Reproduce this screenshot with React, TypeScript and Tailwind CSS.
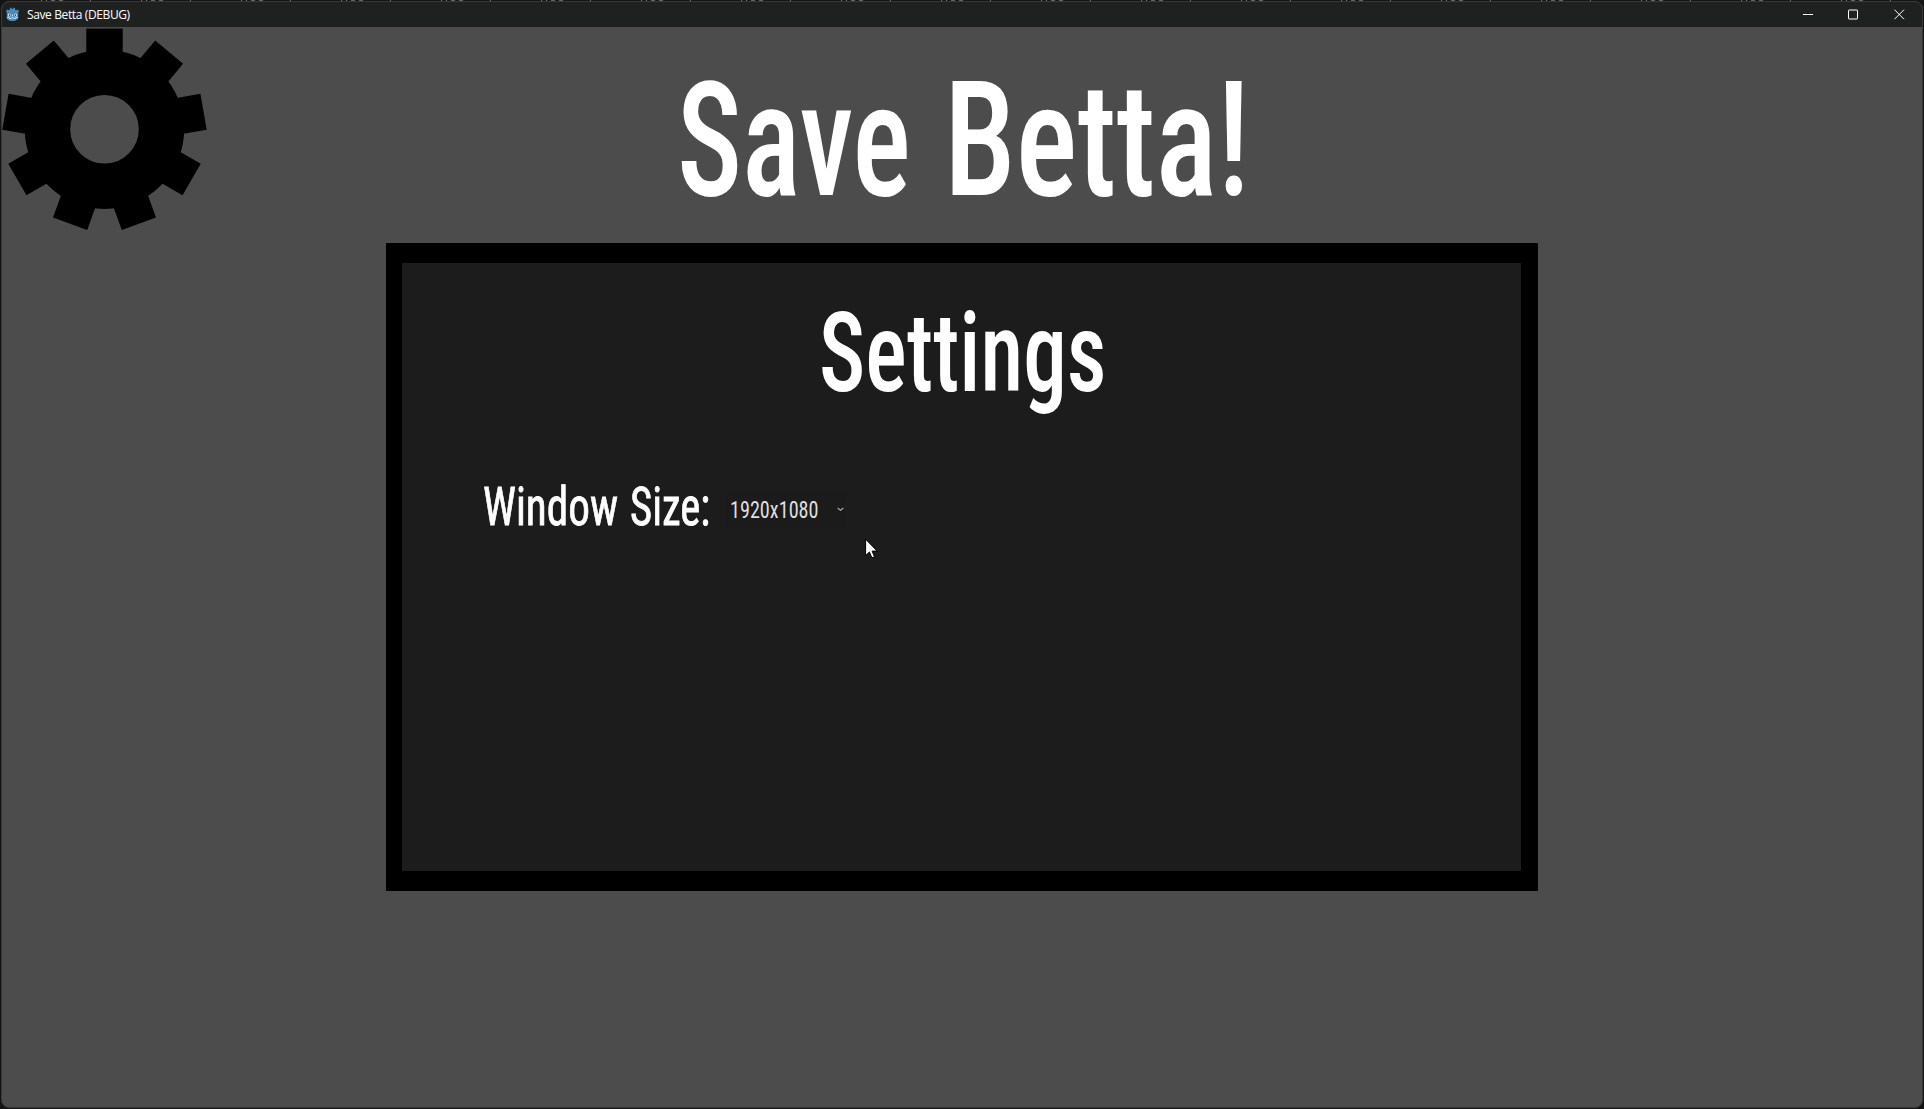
const teeth = [0, 40, 80, 120, 160, 200, 240, 280, 320];
const marks = Array.from({ length: 20 }, (_, i) => i);

const Ruler = () => {
  return (
    <div className="w-full h-px flex shrink-0 overflow-hidden">
      {marks.map((mark) => (
        <div key={mark} className="w-[100px] h-px flex shrink-0 pl-[41px]">
          <div className="w-px h-px bg-[#777777]" />
          <div className="w-px h-px ml-1 bg-[#777777]" />
          <div className="w-[4px] h-px ml-1 bg-[#666666]" />
          <div className="w-[4px] h-px ml-1 bg-[#666666]" />
          <div className="w-px h-px ml-[27px] bg-[#777777]" />
        </div>
      ))}
    </div>
  );
};

const RobotIcon = () => {
  return (
    <svg className="w-[15px] h-[15px]" viewBox="0 0 15 15">
      <path
        d="M1 4.2 2.2 2.6 3.8 3.3 5 2.8 4.9 1.2 6.4.6 7 2h1l.6-1.4 1.5.6L10 2.8l1.2.5 1.6-.7L14 4.2l-.8 1.4v5.2c0 2-2.5 3.2-5.7 3.2s-5.7-1.2-5.7-3.2V5.6z"
        fill="#478cbf"
      />
      <circle cx="4.4" cy="8" r="1.6" fill="#e4edf4" />
      <circle cx="10.6" cy="8" r="1.6" fill="#e4edf4" />
      <circle cx="4.6" cy="8.1" r="0.9" fill="#414042" />
      <circle cx="10.4" cy="8.1" r="0.9" fill="#414042" />
      <path d="M7.5 7.6v1.7" stroke="#e4edf4" strokeWidth="0.9" />
      <path
        d="M1.9 10.4h2.3l.3 1.2h1.7l.3-.9h2l.3.9h1.7l.3-1.2h2.3"
        fill="none"
        stroke="#e4edf4"
        strokeWidth="0.8"
      />
    </svg>
  );
};

const TitleBar = () => {
  return (
    <div className="w-full h-[25px] shrink-0 flex items-center justify-between bg-[#1f2120] pl-[3px] pr-[17px] text-white">
      <div className="flex items-center gap-x-[7px]">
        <RobotIcon />
        <p className="font-['Open_Sans',sans-serif] text-[12px] leading-[16px] tracking-[-0.38px] whitespace-nowrap">
          Save Betta (DEBUG)
        </p>
      </div>
      <svg className="w-[102px] h-[11px]" viewBox="0 0 102 11" fill="none" stroke="#ffffff">
        <path d="M0 5.5h10" />
        <rect x="45.5" y="1" width="9" height="9" rx="0.5" />
        <path d="M91.5.7l9.5 9.5M101 .7l-9.5 9.5" />
      </svg>
    </div>
  );
};

const Gear = () => {
  return (
    <svg className="w-[210px] h-[210px] shrink-0" viewBox="2 27 210 210">
      <g transform="translate(104.5 129.2)">
        <circle r="57" fill="none" stroke="#000000" strokeWidth="45.4" />
        {teeth.map((angle) => (
          <rect
            key={angle}
            x="-18.2"
            y="-100.6"
            width="36.4"
            height="38"
            fill="#000000"
            transform={`rotate(${angle})`}
          />
        ))}
      </g>
    </svg>
  );
};

const Cursor = () => {
  return (
    <svg className="absolute left-[865px] top-[538px] w-[13px] h-[21px]" viewBox="0 0 13 21">
      <path
        d="M.6 1.2v16.4l3.8-3.6 2.5 5.8 2.6-1.1-2.4-5.6h5.1z"
        fill="#ffffff"
        stroke="#000000"
        strokeWidth="1"
      />
    </svg>
  );
};

const Settings = () => {
  return (
    <div className="w-[1152px] h-[648px] ml-[384px] shrink-0 bg-black py-5 pl-4 pr-[17px]">
      <div className="w-full h-full bg-[#1c1c1c] flex flex-col pt-9">
        <h2 className="h-[110px] ml-[417px] text-[110.4px] leading-[110px] whitespace-nowrap">
          <span className="inline-block origin-left scale-x-[0.791]">Settings</span>
        </h2>
        <div className="flex mt-[70px] ml-[80.5px] whitespace-nowrap">
          <p className="flex text-[54.4px] leading-[56px] font-normal [-webkit-text-stroke:0.8px_white]">
            <span className="w-[147px]">
              <span className="inline-block origin-left scale-x-[0.795]">Window</span>
            </span>
            <span className="w-[95.5px]">
              <span className="inline-block origin-left scale-x-[0.785]">Size:</span>
            </span>
          </p>
          <button className="w-[120px] h-[38px] mt-[12px] pl-[4.5px] pr-2 flex items-center bg-[#1b1b1b] text-[#dfdfdf]">
            <span className="w-[107.5px] text-left text-[24.6px] leading-[36px] font-normal">
              <span className="inline-block origin-left scale-x-[0.82]">1920x1080</span>
            </span>
            <svg className="w-[7px] h-[5px] mb-px shrink-0" viewBox="0 0 7 5" fill="none">
              <path d="M.7 1l2.8 2.3L6.3 1" stroke="#b4b4b4" strokeWidth="1.1" />
            </svg>
          </button>
        </div>
      </div>
    </div>
  );
};

export default function App() {
  return (
    <div className="relative w-[1924px] h-[1109px] overflow-hidden bg-[#141414] flex flex-col">
      <Ruler />
      <div className="h-[1107px] mx-px rounded-lg border border-[#383838] bg-[#4c4c4c] overflow-hidden flex flex-col text-white font-medium font-['Roboto_Condensed','Roboto',sans-serif]">
        <TitleBar />
        <div className="h-[216px] shrink-0 flex items-start">
          <Gear />
          <h1 className="flex pt-[34px] pl-[464.5px] text-[159px] leading-[160px] whitespace-nowrap">
            <span className="w-[267px]">
              <span className="inline-block origin-left scale-x-[0.772]">Save</span>
            </span>
            <span>
              <span className="inline-block origin-left scale-x-[0.815]">Betta!</span>
            </span>
          </h1>
        </div>
        <Settings />
      </div>
      <Cursor />
    </div>
  );
}
